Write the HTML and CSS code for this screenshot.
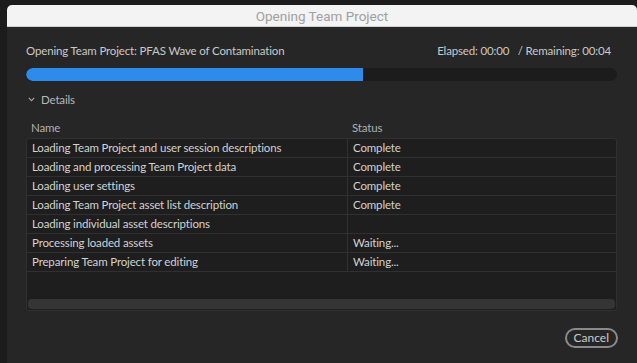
FILE: index.html
```html
<!DOCTYPE html>
<html lang="en">
<head>
    <meta charset="UTF-8">
    <title>Opening Team Project</title>
    <link rel="stylesheet" href="styles.css">
</head>
<body>
    <div class="desktop">
        <div class="dialog">
            <div class="titlebar">Opening Team Project</div>
            <div class="content">
                <div class="status-line">
                    <span class="project-name">Opening Team Project: PFAS Wave of Contamination</span>
                    <span class="timing">Elapsed: 00:00 &nbsp;&nbsp;/ Remaining: 00:04</span>
                </div>

                <div class="progress">
                    <div class="progress-fill" style="width: 57%"></div>
                </div>

                <div class="details-toggle">
                    <svg class="chevron" width="7" height="5" viewBox="0 0 7 5">
                        <path d="M0.8 0.8 L3.5 3.6 L6.2 0.8" fill="none" stroke="#a8a8a8" stroke-width="1.1"/>
                    </svg>
                    <span>Details</span>
                </div>

                <div class="table-head">
                    <div class="col-name">Name</div>
                    <div class="col-status">Status</div>
                </div>

                <div class="table">
                    <div class="rows">
                        <div class="row"><div class="col-name">Loading Team Project and user session descriptions</div><div class="col-status">Complete</div></div>
                        <div class="row"><div class="col-name">Loading and processing Team Project data</div><div class="col-status">Complete</div></div>
                        <div class="row"><div class="col-name">Loading user settings</div><div class="col-status">Complete</div></div>
                        <div class="row"><div class="col-name">Loading Team Project asset list description</div><div class="col-status">Complete</div></div>
                        <div class="row"><div class="col-name">Loading individual asset descriptions</div><div class="col-status"></div></div>
                        <div class="row"><div class="col-name">Processing loaded assets</div><div class="col-status">Waiting...</div></div>
                        <div class="row"><div class="col-name">Preparing Team Project for editing</div><div class="col-status">Waiting...</div></div>
                    </div>
                    <div class="scrollbar"></div>
                </div>

                <div class="footer">
                    <button class="cancel-btn">Cancel</button>
                </div>
            </div>
        </div>
    </div>
</body>
</html>
```

FILE: styles.css
```css
* {
    margin: 0;
    padding: 0;
    box-sizing: border-box;
}

body {
    background-color: #1c1c1c;
    font-family: Lato, "Open Sans", sans-serif;
    font-size: 11.5px;
    letter-spacing: -0.15px;
    color: #c9c9c9;
    width: 637px;
    height: 363px;
    overflow: hidden;
}

.desktop {
    padding: 5px 0 0 7px;
}

.dialog {
    width: 630px;
    height: 358px;
    background-color: #262626;
    border-radius: 5px 5px 0 0;
    overflow: hidden;
}

.titlebar {
    height: 22px;
    background-color: #f3f3f3;
    border-bottom: 1px solid #cfcfcf;
    color: #a0a0a0;
    font-family: Roboto, "Liberation Sans", sans-serif;
    font-size: 13.5px;
    letter-spacing: 0;
    line-height: 22px;
    text-align: center;
}

.content {
    padding: 16px 20px 0 19px;
}

.status-line {
    display: flex;
    justify-content: space-between;
    height: 16px;
    line-height: 16px;
    padding-right: 6px;
}

.progress {
    margin-top: 9px;
    height: 13px;
    background-color: #1c1c1c;
    border-radius: 7px;
    overflow: hidden;
}

.progress-fill {
    height: 100%;
    background-color: #2d8ceb;
    border-radius: 7px 0 0 7px;
}

.details-toggle {
    display: flex;
    align-items: center;
    gap: 6px;
    margin-top: 10px;
    height: 16px;
    padding-left: 2px;
    color: #b8b8b8;
}

.table-head {
    display: flex;
    margin-top: 13px;
    height: 16px;
    line-height: 15px;
    color: #b0b0b0;
}

.table-head .col-name {
    width: 321px;
    padding-left: 5px;
}

.table-head .col-status {
    padding-left: 5px;
}

.table {
    margin-top: 2px;
    height: 173px;
    background-color: #1e1e1e;
    border: 1px solid #303030;
    border-radius: 3px;
    display: flex;
    flex-direction: column;
    justify-content: space-between;
}

.row {
    display: flex;
    height: 19px;
    line-height: 17px;
    border-bottom: 1px solid #303030;
    color: #d2d2d2;
}

.row .col-name {
    width: 321px;
    padding-left: 5px;
    border-right: 1px solid #303030;
}

.row .col-status {
    padding-left: 5px;
}

.scrollbar {
    height: 10px;
    margin: 0 1px 1px;
    background-color: #353535;
    border-radius: 4px;
}

.footer {
    display: flex;
    justify-content: flex-end;
    margin-top: 17px;
}

.cancel-btn {
    height: 20px;
    padding: 0 7px;
    background: transparent;
    border: 2px solid #8a8a8a;
    border-radius: 10px;
    color: #cccccc;
    font-family: Lato, "Open Sans", sans-serif;
    font-size: 12px;
    line-height: 16px;
    margin-right: -1px;
}
```
